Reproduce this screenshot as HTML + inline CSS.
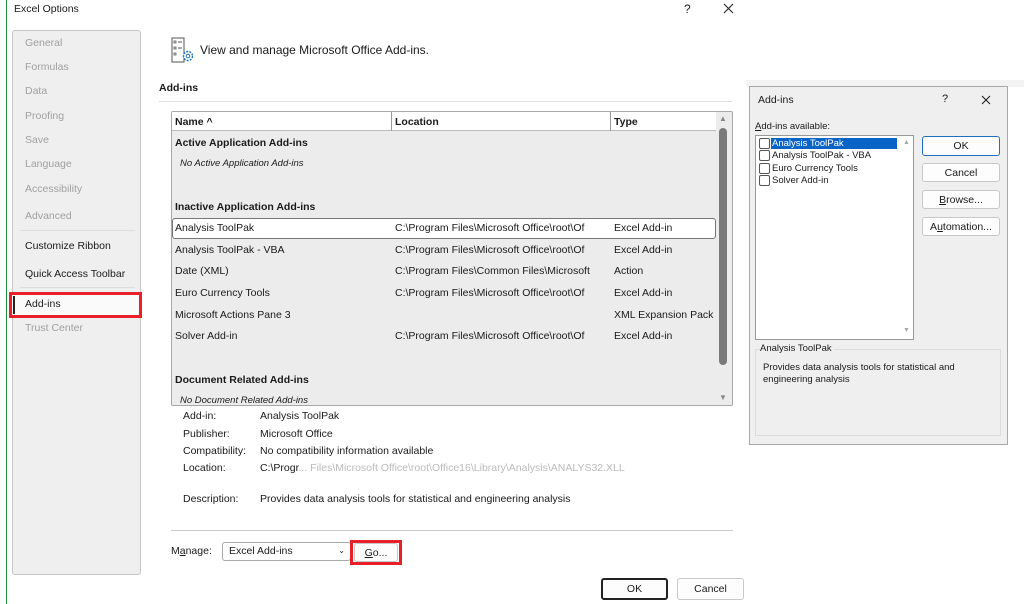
<!DOCTYPE html>
<html><head><meta charset="utf-8"><style>
*{box-sizing:border-box;margin:0;padding:0}
body{width:1024px;height:604px;background:#fff;position:relative;overflow:hidden;font-family:"Liberation Sans",sans-serif;font-size:10.5px;color:#1a1a1a}
.a{position:absolute;white-space:nowrap}
.g{color:#a0a0a0}
.b{font-weight:bold}
.i{font-style:italic;font-size:9.5px}
.btn{position:absolute;background:#fdfdfd;border:1px solid #c8c8c8;border-radius:3px;text-align:center;font-size:10.5px}
</style></head><body>
<div class="a" style="left:6px;top:0;width:1px;height:604px;background:#1e8c3a"></div>
<div class="a" style="left:14px;top:3px;font-size:10.5px">Excel Options</div>
<div class="a" style="left:684px;top:2px;font-size:12px">?</div>
<svg class="a" style="left:723px;top:3px" width="11" height="11"><path d="M1 1L10 10M10 1L1 10" stroke="#222" stroke-width="1.1"/></svg>

<div class="a" style="left:12px;top:30px;width:129px;height:545px;background:#efefef;border:1px solid #c6c6c6;border-radius:3px"></div>
<div class="a g" style="left:25px;top:37px">General</div>
<div class="a g" style="left:25px;top:61px">Formulas</div>
<div class="a g" style="left:25px;top:85px">Data</div>
<div class="a g" style="left:25px;top:110px">Proofing</div>
<div class="a g" style="left:25px;top:134px">Save</div>
<div class="a g" style="left:25px;top:158px">Language</div>
<div class="a g" style="left:25px;top:183px">Accessibility</div>
<div class="a g" style="left:25px;top:210px">Advanced</div>
<div class="a" style="left:20px;top:230px;width:115px;height:1px;background:#ddd"></div>
<div class="a" style="left:25px;top:240px">Customize Ribbon</div>
<div class="a" style="left:25px;top:268px">Quick Access Toolbar</div>
<div class="a" style="left:20px;top:287px;width:115px;height:1px;background:#ddd"></div>
<div class="a" style="left:9px;top:292px;width:133px;height:26px;border:3px solid #e8202a"></div>
<div class="a" style="left:12px;top:295px;width:127px;height:20px;background:#fafafa"></div>
<div class="a" style="left:13px;top:296px;width:2px;height:18px;background:#222"></div>
<div class="a" style="left:25px;top:298px">Add-ins</div>
<div class="a g" style="left:25px;top:322px">Trust Center</div>

<svg class="a" style="left:171px;top:37px" width="26" height="28" viewBox="0 0 26 28"><rect x="1" y="1" width="12" height="24" fill="#fff" stroke="#555"/><rect x="3" y="4" width="2" height="2" fill="none" stroke="#555" stroke-width=".8"/><line x1="7" y1="5" x2="11" y2="5" stroke="#555"/><rect x="3" y="10" width="2" height="2" fill="none" stroke="#555" stroke-width=".8"/><line x1="7" y1="11" x2="11" y2="11" stroke="#555"/><rect x="3" y="16" width="2" height="2" fill="none" stroke="#555" stroke-width=".8"/><circle cx="17" cy="19" r="4.5" fill="#fff" stroke="#1f6fc5" stroke-width="1.4" stroke-dasharray="2 1.2"/><circle cx="17" cy="19" r="1.8" fill="none" stroke="#1f6fc5"/></svg>
<div class="a" style="left:200px;top:43px;font-size:12px">View and manage Microsoft Office Add-ins.</div>
<div class="a b" style="left:159px;top:82px">Add-ins</div>
<div class="a" style="left:159px;top:101px;width:573px;height:1px;background:#ddd"></div>

<div class="a" style="left:171px;top:111px;width:562px;height:295px;background:#ececec;border:1px solid #a8a8a8;border-radius:2px"></div>
<div class="a" style="left:172px;top:112px;width:544px;height:19px;background:#fff;border-bottom:1px solid #bbb"></div>
<div class="a" style="left:391px;top:112px;width:1px;height:19px;background:#999"></div>
<div class="a" style="left:610px;top:112px;width:1px;height:19px;background:#999"></div>
<div class="a b" style="left:175px;top:116px">Name ^</div>
<div class="a b" style="left:395px;top:116px">Location</div>
<div class="a b" style="left:614px;top:116px">Type</div>
<div class="a" style="left:719px;top:114px;font-size:8px;color:#888">▲</div>
<div class="a" style="left:719px;top:128px;width:8px;height:237px;background:#7a7a7a;border-radius:4px"></div>
<div class="a" style="left:719px;top:393px;font-size:8px;color:#888">▼</div>
<div class="a b" style="left:175px;top:137px">Active Application Add-ins</div>
<div class="a i" style="left:180px;top:158px">No Active Application Add-ins</div>
<div class="a b" style="left:175px;top:201px">Inactive Application Add-ins</div>
<div class="a" style="left:172px;top:218px;width:544px;height:21px;background:#fff;border:1px solid #777;border-radius:3px"></div>
<div class="a" style="left:175px;top:222px">Analysis ToolPak</div><div class="a" style="left:395px;top:222px">C:\Program Files\Microsoft Office\root\Of</div><div class="a" style="left:614px;top:222px">Excel Add-in</div>
<div class="a" style="left:175px;top:244px">Analysis ToolPak - VBA</div><div class="a" style="left:395px;top:244px">C:\Program Files\Microsoft Office\root\Of</div><div class="a" style="left:614px;top:244px">Excel Add-in</div>
<div class="a" style="left:175px;top:265px">Date (XML)</div><div class="a" style="left:395px;top:265px">C:\Program Files\Common Files\Microsoft</div><div class="a" style="left:614px;top:265px">Action</div>
<div class="a" style="left:175px;top:287px">Euro Currency Tools</div><div class="a" style="left:395px;top:287px">C:\Program Files\Microsoft Office\root\Of</div><div class="a" style="left:614px;top:287px">Excel Add-in</div>
<div class="a" style="left:175px;top:309px">Microsoft Actions Pane 3</div><div class="a" style="left:614px;top:309px">XML Expansion Pack</div>
<div class="a" style="left:175px;top:330px">Solver Add-in</div><div class="a" style="left:395px;top:330px">C:\Program Files\Microsoft Office\root\Of</div><div class="a" style="left:614px;top:330px">Excel Add-in</div>
<div class="a b" style="left:175px;top:374px">Document Related Add-ins</div>
<div class="a i" style="left:180px;top:395px">No Document Related Add-ins</div>

<div class="a" style="left:183px;top:410px">Add-in:</div><div class="a" style="left:260px;top:410px">Analysis ToolPak</div>
<div class="a" style="left:183px;top:428px">Publisher:</div><div class="a" style="left:260px;top:428px">Microsoft Office</div>
<div class="a" style="left:183px;top:445px">Compatibility:</div><div class="a" style="left:260px;top:445px">No compatibility information available</div>
<div class="a" style="left:183px;top:462px">Location:</div><div class="a" style="left:260px;top:462px">C:\Progr<span style="color:#bbb">... Files\Microsoft Office\root\Office16\Library\Analysis\ANALYS32.XLL</span></div>
<div class="a" style="left:183px;top:493px">Description:</div><div class="a" style="left:260px;top:493px">Provides data analysis tools for statistical and engineering analysis</div>
<div class="a" style="left:171px;top:530px;width:562px;height:1px;background:#ccc"></div>
<div class="a" style="left:171px;top:545px">M<u>a</u>nage:</div>
<div class="a" style="left:222px;top:542px;width:129px;height:19px;border:1px solid #aaa;border-radius:3px;padding:2px 6px">Excel Add-ins<span style="position:absolute;right:5px;top:3px;font-size:8px">⌄</span></div>
<div class="a" style="left:350px;top:540px;width:52px;height:25px;border:3px solid #e8202a"></div>
<div class="btn" style="left:354px;top:543px;width:44px;height:19px;padding-top:3px"><u>G</u>o...</div>
<div class="btn" style="left:601px;top:578px;width:67px;height:22px;border:2px solid #222;padding-top:3px">OK</div>
<div class="btn" style="left:677px;top:578px;width:67px;height:22px;padding-top:4px">Cancel</div>

<div class="a" style="left:746px;top:80px;width:278px;height:7px;background:#f3f3f3"></div>
<div class="a" style="left:749px;top:86px;width:259px;height:359px;background:#efefef;border:1px solid #a8a8a8"></div>
<div class="a" style="left:758px;top:94px">Add-ins</div>
<div class="a" style="left:942px;top:93px;font-size:11px">?</div>
<svg class="a" style="left:981px;top:95px" width="10" height="10"><path d="M1 1L9 9M9 1L1 9" stroke="#222" stroke-width="1.1"/></svg>
<div class="a" style="left:755px;top:121px;font-size:9.5px"><u>A</u>dd-ins available:</div>
<div class="a" style="left:755px;top:135px;width:159px;height:205px;background:#fff;border:1px solid #999"></div>
<div class="a" style="left:771px;top:138px;width:126px;height:11px;background:#0a64c8"></div>
<div class="a" style="left:903px;top:139px;font-size:7px;color:#aaa">▲</div>
<div class="a" style="left:903px;top:327px;font-size:7px;color:#aaa">▼</div>
<div class="a" style="left:759px;top:138px;width:11px;height:11px;border:1px solid #555;border-radius:2px;background:#fff"></div>
<div class="a" style="left:759px;top:150px;width:11px;height:11px;border:1px solid #555;border-radius:2px;background:#fff"></div>
<div class="a" style="left:759px;top:163px;width:11px;height:11px;border:1px solid #555;border-radius:2px;background:#fff"></div>
<div class="a" style="left:759px;top:175px;width:11px;height:11px;border:1px solid #555;border-radius:2px;background:#fff"></div>
<div class="a" style="left:772px;top:138px;font-size:9.5px;color:#fff">Analysis ToolPak</div>
<div class="a" style="left:772px;top:150px;font-size:9.5px">Analysis ToolPak - VBA</div>
<div class="a" style="left:772px;top:163px;font-size:9.5px">Euro Currency Tools</div>
<div class="a" style="left:772px;top:175px;font-size:9.5px">Solver Add-in</div>
<div class="btn" style="left:922px;top:136px;width:78px;height:20px;border-color:#1f6fc5;padding-top:3px">OK</div>
<div class="btn" style="left:922px;top:163px;width:78px;height:19px;padding-top:3px">Cancel</div>
<div class="btn" style="left:922px;top:190px;width:78px;height:19px;padding-top:3px"><u>B</u>rowse...</div>
<div class="btn" style="left:922px;top:217px;width:78px;height:19px;padding-top:3px">A<u>u</u>tomation...</div>
<div class="a" style="left:755px;top:349px;width:246px;height:87px;border:1px solid #dcdcdc"></div>
<div class="a" style="left:760px;top:343px;font-size:9.5px;background:#efefef;padding-right:2px">Analysis ToolPak</div>
<div class="a" style="left:763px;top:362px;font-size:9.5px;line-height:12px">Provides data analysis tools for statistical and<br>engineering analysis</div>
</body></html>
